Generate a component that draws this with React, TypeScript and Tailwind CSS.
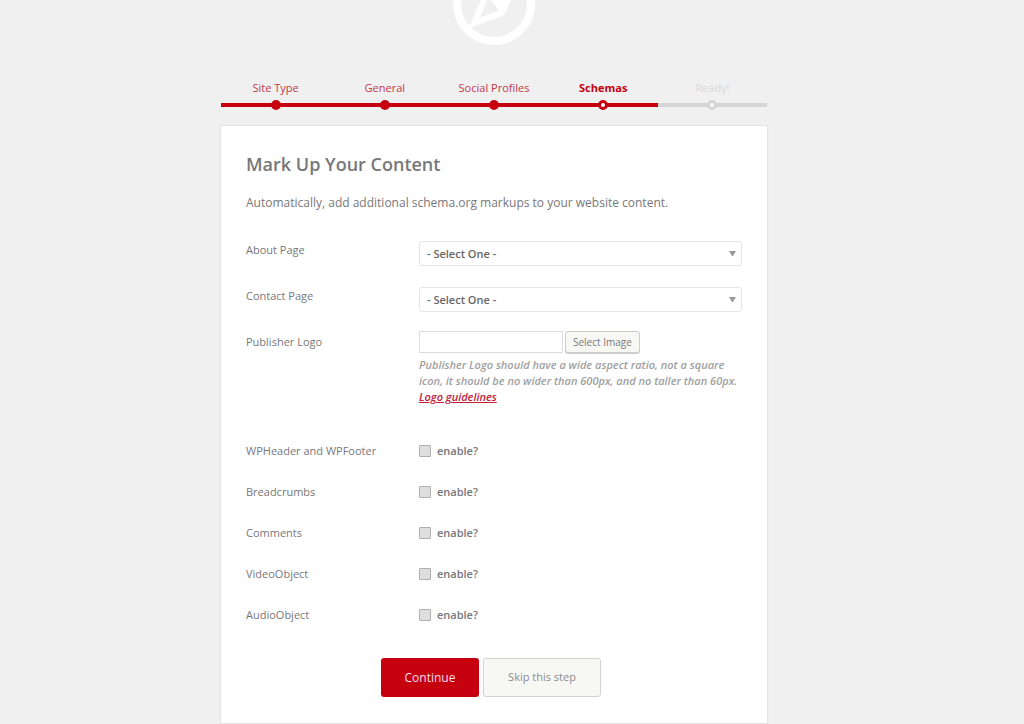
import { useState } from "react";

const steps = [
  { label: "Site Type", state: "done" },
  { label: "General", state: "done" },
  { label: "Social Profiles", state: "done" },
  { label: "Schemas", state: "active" },
  { label: "Ready!", state: "todo" },
];

const toggles = [
  { id: "wpheader", label: "WPHeader and WPFooter" },
  { id: "breadcrumbs", label: "Breadcrumbs" },
  { id: "comments", label: "Comments" },
  { id: "video", label: "VideoObject" },
  { id: "audio", label: "AudioObject" },
];

const stepText: Record<string, string> = {
  done: "text-[#c4374b]",
  active: "font-bold text-[#c6000f]",
  todo: "text-[#d8d8d8]",
};

const stepLine: Record<string, string> = {
  done: "bg-[#c6000f]",
  active: "bg-[#c6000f]",
  todo: "bg-[#d6d6d6]",
};

const stepDot: Record<string, string> = {
  done: "border-[#c6000f] bg-[#c6000f]",
  active: "border-[#c6000f] bg-white",
  todo: "border-[#d6d6d6] bg-white",
};

function Logo() {
  return (
    <svg viewBox="-41 -4 82 45" className="mx-auto block h-[45px] w-[82px]" aria-hidden="true">
      <circle r="37" fill="none" stroke="#fff" strokeWidth="8" />
      <path
        fill="#fff"
        fillRule="evenodd"
        d="M-26 25 L-13 -4 L17 -4 L10 11 Z M-14 13.5 L5 6.5 L-4.5 -5 L-6.5 -5 Z"
      />
    </svg>
  );
}

function PageSelect({ id, label }: { id: string; label: string }) {
  return (
    <div className="flex">
      <label htmlFor={id} className="w-[173px] shrink-0 text-[11px] leading-[18px]">
        {label}
      </label>
      <div className="relative flex-1">
        <select
          id={id}
          className="block h-[25px] w-full appearance-none rounded-[3px] border border-[#e5e5e5] bg-white px-[7px] pt-[2px] text-[11px] font-semibold text-[#666]"
        >
          <option>- Select One -</option>
        </select>
        <svg
          viewBox="0 0 7 5"
          className="pointer-events-none absolute top-[10px] right-[6px] h-[5px] w-[7px]"
          aria-hidden="true"
        >
          <path d="M0 0H7L4 5H3Z" fill="#999" />
        </svg>
      </div>
    </div>
  );
}

export default function App() {
  const [logo, setLogo] = useState("");
  return (
    <div className="min-h-screen bg-[#f0f0f0] pr-9 font-['Open_Sans','Noto_Sans',sans-serif] text-[#77777a]">
      <div className="mx-auto max-w-[546px]">
        <Logo />
        <ol className="flex pt-[34px] pb-4 text-center text-[11px] leading-[18px]">
          {steps.map((s) => (
            <li key={s.label} className={`flex-1 ${stepText[s.state]}`}>
              {s.label}
              <div className="mt-[3px] grid items-center">
                <span className={`col-start-1 row-start-1 h-[4px] ${stepLine[s.state]}`} />
                <span
                  className={`col-start-1 row-start-1 size-[10px] justify-self-center rounded-full border-[3px] ${stepDot[s.state]}`}
                />
              </div>
            </li>
          ))}
        </ol>

        <form
          onSubmit={(e) => e.preventDefault()}
          className="bg-white px-[25px] pt-[24px] pb-[26px] shadow-[0_0_1px_1px_#e3e3e3]"
        >
          <h1 className="text-[18px] leading-7 font-semibold">Mark Up Your Content</h1>
          <p className="pt-[15px] pb-[28px] text-[12px] leading-5">
            Automatically, add additional schema.org markups to your website content.
          </p>

          <div className="flex flex-col gap-[21px] pb-[19px]">
            <PageSelect id="about" label="About Page" />
            <PageSelect id="contact" label="Contact Page" />
          </div>

          <div className="flex pb-[36px]">
            <label htmlFor="logo" className="w-[173px] shrink-0 text-[11px] leading-[22px]">
              Publisher Logo
            </label>
            <div className="flex-1">
              <div className="flex items-center gap-[2px]">
                <input
                  id="logo"
                  type="text"
                  value={logo}
                  onChange={(e) => setLogo(e.target.value)}
                  className="h-[22px] w-[144px] border border-[#ddd] bg-white px-1 text-[11px]"
                />
                <button
                  type="button"
                  className="h-[22px] rounded-[3px] border border-[#ccc] bg-[#f7f8f3] px-[7px] text-[10px] shadow-[0_1px_0_#ccc]"
                >
                  Select Image
                </button>
              </div>
              <p className="pt-[4px] text-[11px] leading-4 font-semibold text-[#a0a0a0] italic">
                Publisher Logo should have a wide aspect ratio, not a square icon, it should be no
                wider than 600px, and no taller than 60px.{" "}
                <a href="#guidelines" className="block text-[#c4203a] underline">
                  Logo guidelines
                </a>
              </p>
            </div>
          </div>

          {toggles.map((t) => (
            <div key={t.id} className="flex items-center pb-[21px] text-[11px] leading-5">
              <span className="w-[173px] shrink-0">{t.label}</span>
              <input
                id={t.id}
                type="checkbox"
                aria-label={t.label}
                className="size-[12px] appearance-none rounded-[1px] border border-[#b0b0b0] bg-[#dedede] checked:bg-[#c6000f]"
              />
              <label htmlFor={t.id} className="pl-[6px] text-[11px] font-semibold">
                enable?
              </label>
            </div>
          ))}

          <div className="flex justify-center gap-[4px] pt-[12px] pr-[6px]">
            <button
              type="submit"
              className="h-[39px] w-[98px] rounded-[3px] bg-[#c6000f] text-[12px] text-[#f3dfee]"
            >
              Continue
            </button>
            <button
              type="button"
              className="h-[39px] w-[118px] rounded-[3px] border border-[#d3d3d3] bg-[#f7f8f3] text-[11px] text-[#8b8b8f]"
            >
              Skip this step
            </button>
          </div>
        </form>
      </div>
    </div>
  );
}
